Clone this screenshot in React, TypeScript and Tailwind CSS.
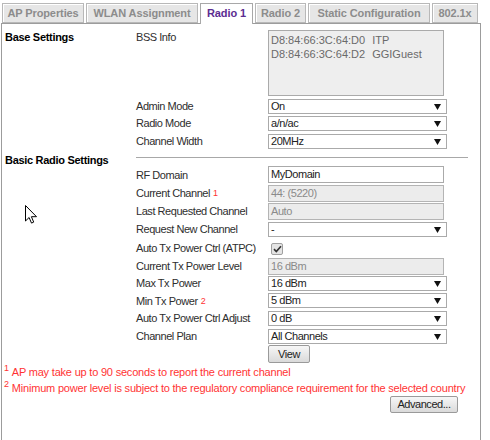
import type { ReactNode } from 'react'

const tabs = [
  { name: 'AP Properties', w: 'w-[82px]' },
  { name: 'WLAN Assignment', w: 'w-[112px]' },
  { name: 'Radio 1', w: 'w-[53px]', active: true },
  { name: 'Radio 2', w: 'w-[51px]' },
  { name: 'Static Configuration', w: 'w-[122px]' },
  { name: '802.1x', w: 'w-[46px]' },
]

const Arrow = () => (
  <svg width="7" height="6" viewBox="0 0 7 6">
    <path d="M0 0h7L3.5 6z" fill="#111" />
  </svg>
)

const Select = ({ value }: { value: string }) => (
  <div className="flex h-[15px] w-[179px] items-center justify-between border border-[#aaa] bg-white pl-[2px] pr-[5px] leading-[13px] text-[#222]">
    <span>{value}</span>
    <Arrow />
  </div>
)

const Input = ({ value, disabled }: { value: string; disabled?: boolean }) => (
  <div
    className={
      disabled
        ? 'flex h-[17px] w-[176px] items-center border border-[#b4b4b4] bg-[#ececec] pl-[2px] text-[#8a8a8a]'
        : 'flex h-[17px] w-[176px] items-center border border-[#aaa] bg-white pl-[2px] text-[#222]'
    }
  >
    {value}
  </div>
)

const Sup = ({ n }: { n: string }) => (
  <sup className="relative -top-[1px] ml-[3px] text-[9px] text-[#f33]">{n}</sup>
)

// one table row: section | label | control
function Row({
  h,
  pt,
  section,
  label,
  children,
}: {
  h: string
  pt: string
  section?: string
  label?: ReactNode
  children?: ReactNode
}) {
  return (
    <div className={`flex ${h}`}>
      <div className="w-[134px] pl-[3px] font-bold tracking-[-0.3px] text-black">{section}</div>
      <div className="flex w-[132px] items-center text-[#2e2e2e]">{label}</div>
      <div className={pt}>{children}</div>
    </div>
  )
}

export default function App() {
  return (
    <div
      className="relative h-[440px] w-[490px] overflow-hidden bg-white text-[11px] tracking-[-0.45px]"
      style={{ fontFamily: "'Liberation Sans', Arial, sans-serif" }}
    >
      {/* tabs */}
      <div className="flex gap-[2px] pl-[2px] pt-[3px]">
        {tabs.map((t) =>
          t.active ? (
            <div
              key={t.name}
              className={`${t.w} relative z-10 -mb-px flex h-[21px] items-center justify-center border border-b-0 border-[#a8a8a8] bg-white pb-[1px] font-bold tracking-[-0.1px] text-[#5c2d91]`}
            >
              {t.name}
            </div>
          ) : (
            <div
              key={t.name}
              className={`${t.w} flex h-[20px] items-center justify-center border border-[#b8b8b8] bg-[#e6e6e6] font-bold tracking-[-0.1px] text-[#8c8c8c] shadow-[inset_1px_1px_0_#fff]`}
            >
              {t.name}
            </div>
          ),
        )}
      </div>

      {/* panel */}
      <div className="ml-[1px] h-[417px] w-[480px] border-l border-r border-t border-[#9c9c9c]">
        <div className="flex h-[74px]">
          <div className="w-[134px] pl-[3px] pt-[6px] font-bold leading-[14px] tracking-[-0.3px] text-black">
            Base Settings
          </div>
          <div className="w-[132px] pt-[6px] leading-[14px] text-[#2e2e2e]">BSS Info</div>
          <div className="pt-[6px]">
            <div className="h-[66px] w-[176px] border border-[#aaa] bg-[#eeeeee] pl-[2px] pt-[2px] text-[11px] leading-[14px] tracking-[0px] text-[#6a6a6a]">
              <div className="flex gap-[7px]">
                <span>D8:84:66:3C:64:D0</span>
                <span>ITP</span>
              </div>
              <div className="flex gap-[7px]">
                <span>D8:84:66:3C:64:D2</span>
                <span>GGIGuest</span>
              </div>
            </div>
          </div>
        </div>

        <Row h="h-[17px]" pt="pt-[1px]" label="Admin Mode">
          <Select value="On" />
        </Row>
        <Row h="h-[17px]" pt="pt-[1px]" label="Radio Mode">
          <Select value="a/n/ac" />
        </Row>
        <Row h="h-[18px]" pt="pt-[2px]" label="Channel Width">
          <Select value="20MHz" />
        </Row>

        <div className="flex h-[16px]">
          <div className="w-[134px] pl-[3px] pt-[3px] font-bold leading-[14px] tracking-[-0.3px] text-black">
            Basic Radio Settings
          </div>
          <div className="mt-[7px] h-0 w-[332px] border-t border-[#a8a8a8]" />
        </div>

        <Row h="h-[18px]" pt="pt-0" label="RF Domain">
          <Input value="MyDomain" />
        </Row>
        <Row
          h="h-[18px]"
          pt="pt-[1px]"
          label={
            <span>
              Current Channel
              <Sup n="1" />
            </span>
          }
        >
          <Input value="44: (5220)" disabled />
        </Row>
        <Row h="h-[18px]" pt="pt-[1px]" label="Last Requested Channel">
          <Input value="Auto" disabled />
        </Row>
        <Row h="h-[19px]" pt="pt-[2px]" label="Request New Channel">
          <Select value="-" />
        </Row>
        <Row h="h-[18px]" pt="pt-[4px] pl-[3px]" label="Auto Tx Power Ctrl (ATPC)">
          <div className="flex h-[12px] w-[12px] items-center justify-center rounded-[2px] border border-[#a0a0a0] bg-[#e4e4e4]">
            <svg width="9" height="8" viewBox="0 0 9 8">
              <path d="M1 4.2l2.3 2.3L8 1.2" fill="none" stroke="#333" strokeWidth="1.7" />
            </svg>
          </div>
        </Row>
        <Row h="h-[18px]" pt="pt-[1px]" label="Current Tx Power Level">
          <Input value="16 dBm" disabled />
        </Row>
        <Row h="h-[17px]" pt="pt-[1px]" label="Max Tx Power">
          <Select value="16 dBm" />
        </Row>
        <Row
          h="h-[18px]"
          pt="pt-[1px]"
          label={
            <span>
              Min Tx Power
              <Sup n="2" />
            </span>
          }
        >
          <Select value="5 dBm" />
        </Row>
        <Row h="h-[17px]" pt="pt-[1px]" label="Auto Tx Power Ctrl Adjust">
          <Select value="0 dB" />
        </Row>
        <Row h="h-[18px]" pt="pt-[2px]" label="Channel Plan">
          <Select value="All Channels" />
        </Row>
        <Row h="h-[19px]" pt="pt-0">
          <div className="flex h-[18px] w-[42px] items-center justify-center rounded-[2px] border border-[#9a9a9a] bg-gradient-to-b from-[#f7f7f7] to-[#dadada] text-[#222]">
            View
          </div>
        </Row>

        <div className="flex h-[17px] items-center pl-[2px] tracking-[-0.2px] text-[#f33]">
          <sup className="mr-[3px] text-[9px]">1</sup>
          AP may take up to 90 seconds to report the current channel
        </div>
        <div className="flex h-[15px] items-center pl-[2px] tracking-[-0.2px] text-[#f33]">
          <sup className="mr-[3px] text-[9px]">2</sup>
          Minimum power level is subject to the regulatory compliance requirement for the selected country
        </div>
        <div className="flex justify-end pr-[22px]">
          <div className="flex h-[17px] w-[68px] items-center justify-center rounded-[2px] border border-[#9a9a9a] bg-gradient-to-b from-[#f7f7f7] to-[#dadada] text-[#222]">
            Advanced...
          </div>
        </div>
      </div>

      {/* mouse pointer */}
      <svg className="absolute left-[25px] top-[205px]" width="13" height="19" viewBox="0 0 13 19">
        <path
          d="M0.5 0.5v15.5l3.6-3.5 2.4 5.6 2.2-1-2.3-5.4h5.1z"
          fill="#fff"
          stroke="#000"
          strokeWidth="1"
          strokeLinejoin="round"
        />
      </svg>
    </div>
  )
}
